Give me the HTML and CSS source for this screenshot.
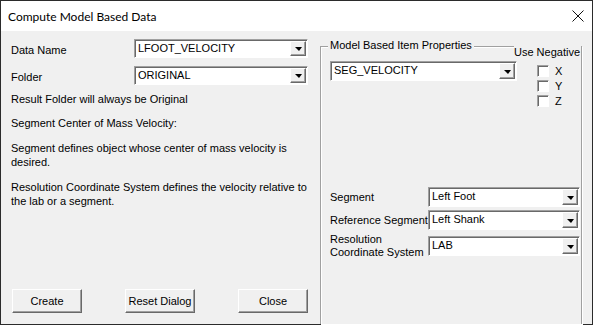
FILE: index.html
```html
<!DOCTYPE html>
<html lang="en">
<head>
    <meta charset="UTF-8">
    <title>Compute Model Based Data</title>
    <link rel="stylesheet" href="styles.css">
</head>
<body>
    <div class="window">
        <div class="titlebar">
            <span class="title">Compute Model Based Data</span>
            <svg class="close" width="12" height="12" viewBox="0 0 12 12">
                <path d="M0.5 0.5 L11.5 11.5 M11.5 0.5 L0.5 11.5" stroke="#111" stroke-width="1" fill="none"/>
            </svg>
        </div>
        <div class="client">
            <div class="left">
                <div class="field-row">
                    <span class="field-label">Data Name</span>
                    <div class="combo combo-left"><span class="combo-text">LFOOT_VELOCITY</span><span class="drop"></span></div>
                </div>
                <div class="field-row">
                    <span class="field-label">Folder</span>
                    <div class="combo combo-left"><span class="combo-text">ORIGINAL</span><span class="drop"></span></div>
                </div>
                <p class="note first">Result Folder will always be Original</p>
                <p class="note">Segment Center of Mass Velocity:</p>
                <p class="note wide">Segment defines object whose center of mass velocity is desired.</p>
                <p class="note wide">Resolution Coordinate System defines the velocity relative to the lab or a segment.</p>
                <div class="buttons">
                    <button class="btn">Create</button>
                    <button class="btn">Reset Dialog</button>
                    <button class="btn">Close</button>
                </div>
            </div>
            <div class="group">
                <span class="group-title">Model Based Item Properties</span>
                <span class="neg-title">Use Negative</span>
                <div class="group-top">
                    <div class="combo combo-seg"><span class="combo-text">SEG_VELOCITY</span><span class="drop"></span></div>
                    <div class="checks">
                        <div class="check-row"><span class="checkbox"></span>X</div>
                        <div class="check-row"><span class="checkbox"></span>Y</div>
                        <div class="check-row"><span class="checkbox"></span>Z</div>
                    </div>
                </div>
                <div class="seg-rows">
                    <div class="seg-row">
                        <span class="seg-label">Segment</span>
                        <div class="combo combo-right"><span class="combo-text">Left Foot</span><span class="drop"></span></div>
                    </div>
                    <div class="seg-row">
                        <span class="seg-label">Reference Segment</span>
                        <div class="combo combo-right"><span class="combo-text">Left Shank</span><span class="drop"></span></div>
                    </div>
                    <div class="seg-row tall">
                        <span class="seg-label">Resolution<br>Coordinate System</span>
                        <div class="combo combo-right"><span class="combo-text">LAB</span><span class="drop"></span></div>
                    </div>
                </div>
            </div>
        </div>
    </div>
</body>
</html>
```

FILE: styles.css
```css
body {
    margin: 0;
    background-color: #f0f0f0;
    font-family: 'Liberation Sans', Arial, sans-serif;
    font-size: 11px;
    color: #000000;
}
.window {
    width: 593px;
    height: 325px;
    box-sizing: border-box;
    border: 1px solid #2b2b2b;
    display: flex;
    flex-direction: column;
    background-color: #f0f0f0;
}
.titlebar {
    height: 30px;
    flex: 0 0 30px;
    background-color: #ffffff;
    display: flex;
    align-items: center;
    justify-content: space-between;
    padding: 0 8px 0 7px;
}
.title {
    font-family: Lato, 'Noto Sans', sans-serif;
    font-size: 12px;
    color: #000000;
}
.close {
    display: block;
}
.client {
    flex: 1;
    display: flex;
}
.left {
    flex: 0 0 309px;
    padding: 8px 0 11px 10px;
    display: flex;
    flex-direction: column;
}
.field-row {
    display: flex;
    align-items: center;
    height: 19px;
    margin-bottom: 8px;
}
.field-label {
    width: 123px;
    padding-top: 3px;
}
.combo {
    display: flex;
    box-sizing: border-box;
    height: 20px;
    background-color: #ffffff;
    border: 1px solid;
    border-color: #a0a0a0 #ffffff #ffffff #a0a0a0;
    box-shadow: inset 1px 1px 0 #696969;
}
.combo-left {
    width: 174px;
    height: 19px;
}
.combo-seg {
    width: 187px;
}
.combo-right {
    width: 152px;
}
.combo-text {
    flex: 1;
    padding: 2px 0 0 3px;
    white-space: nowrap;
}
.drop {
    width: 16px;
    flex: 0 0 16px;
    box-sizing: border-box;
    margin: 1px 1px 1px 0;
    background-color: #f0f0f0;
    border: 1px solid;
    border-color: #ffffff #696969 #696969 #ffffff;
    box-shadow: inset -1px -1px 0 #a0a0a0;
    display: flex;
    align-items: center;
    justify-content: center;
}
.drop::after {
    content: "";
    width: 0;
    height: 0;
    border-left: 4px solid transparent;
    border-right: 3px solid transparent;
    border-top: 4px solid #000000;
    margin-top: 1px;
}
.note {
    margin: 10px 0 0 0;
    line-height: 14px;
}
.note.first {
    margin-top: -1px;
}
.note.wide {
    margin-top: 11px;
    width: 300px;
}
.buttons {
    margin-top: auto;
    display: flex;
    gap: 43px;
    padding-left: 1px;
}
.btn {
    width: 70px;
    height: 24px;
    font-family: 'Liberation Sans', Arial, sans-serif;
    font-size: 11px;
    color: #000000;
    background-color: #f0f0f0;
    border: 1px solid;
    border-color: #ffffff #696969 #696969 #ffffff;
    box-shadow: inset -1px -1px 0 #a0a0a0;
    padding: 0;
}
.group {
    position: relative;
    width: 262px;
    box-sizing: border-box;
    margin-top: 15px;
    border: 1px solid #a0a0a0;
    border-bottom: none;
    box-shadow: inset 1px 1px 0 #ffffff, 1px 1px 0 #ffffff;
    padding: 14px 0 0 9px;
    display: flex;
    flex-direction: column;
}
.group-title {
    position: absolute;
    top: -9px;
    left: 7px;
    padding: 0 2px 0 2px;
    line-height: 14px;
    background-color: #f0f0f0;
}
.neg-title {
    position: absolute;
    top: -2px;
    right: 0;
    width: 67px;
    line-height: 14px;
    background-color: #f0f0f0;
}
.group-top {
    display: flex;
    height: 47px;
}
.checks {
    margin: 2px 0 0 20px;
}
.check-row {
    display: flex;
    align-items: center;
    height: 15px;
}
.checkbox {
    width: 12px;
    height: 12px;
    box-sizing: border-box;
    margin-right: 6px;
    background-color: #ffffff;
    border: 1px solid;
    border-color: #a0a0a0 #ffffff #ffffff #a0a0a0;
    box-shadow: inset 1px 1px 0 #696969;
}
.seg-rows {
    margin-top: 79px;
    display: flex;
    flex-direction: column;
    gap: 3px;
}
.seg-row {
    display: flex;
    align-items: center;
    height: 20px;
}
.seg-row.tall {
    height: 26px;
}
.seg-label {
    width: 98px;
    line-height: 13px;
}
```
